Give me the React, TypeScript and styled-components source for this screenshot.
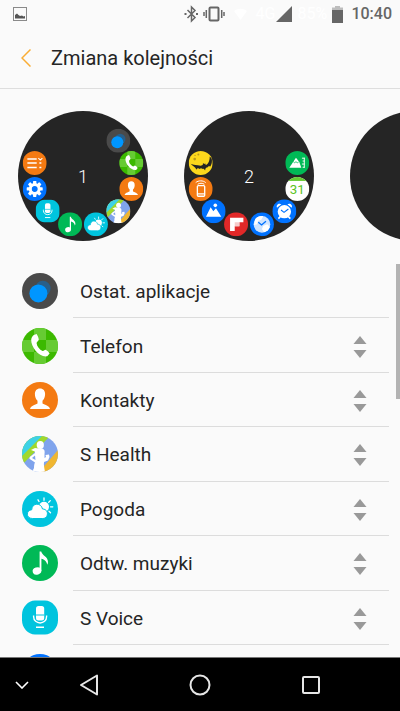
import React from "react";
import styled, { createGlobalStyle } from "styled-components";

const GlobalStyle = createGlobalStyle`
  *, *::before, *::after { box-sizing: border-box; }
  body {
    margin: 0;
    background: #fafafa;
    color: #252525;
    font-family: Roboto, "Noto Sans", sans-serif;
  }
  button {
    margin: 0;
    padding: 0;
    border: 0;
    background: none;
    color: inherit;
    font: inherit;
    cursor: pointer;
  }
  svg { display: block; }
`;

const Screen = styled.div`
  display: flex;
  flex-direction: column;
  height: 100vh;
  overflow: hidden;
`;

const StatusBar = styled.div`
  display: flex;
  align-items: center;
  flex: none;
  height: 28px;
  padding: 0 8px 0 13px;
  color: #666;
`;

const StatusIcons = styled.div`
  display: flex;
  align-items: center;
  margin-left: auto;
`;

const FaintText = styled.span<{ $width: number }>`
  width: ${(p) => p.$width}px;
  color: #fff;
  font-size: 16px;
  line-height: 20px;
  text-align: center;
`;

const Clock = styled.time`
  margin-left: 8px;
  font-size: 16px;
  font-weight: 500;
  line-height: 20px;
`;

const Header = styled.header`
  display: flex;
  align-items: center;
  flex: none;
  height: 61px;
  padding-left: 13px;
  border-bottom: 1px solid #dedede;
`;

const BackButton = styled.button`
  display: grid;
  place-items: center;
  width: 26px;
  height: 40px;
  margin-right: 12px;
`;

const Title = styled.h1`
  margin: 0;
  font-size: 20px;
  font-weight: 400;
  line-height: 24px;
`;

const Carousel = styled.section`
  display: flex;
  flex: none;
  gap: 36px;
  padding: 22px 0 23px 18px;
  overflow: hidden;
`;

const Disc = styled.div`
  position: relative;
  display: grid;
  place-items: center;
  flex: none;
  width: 130px;
  height: 130px;
  border-radius: 50%;
  background: #252525;
  color: #fff;
  font-size: 18px;
  font-weight: 300;
`;

const OrbitItem = styled.span<{ $angle: number }>`
  position: absolute;
  top: calc(50% - 12px);
  left: calc(50% - 12px);
  transform: rotate(${(p) => p.$angle}deg) translate(50px) rotate(${(p) => -p.$angle}deg);
`;

const Badge = styled.span<{ $size: number; $squircle?: boolean }>`
  display: block;
  flex: none;
  width: ${(p) => p.$size}px;
  height: ${(p) => p.$size}px;
  border-radius: ${(p) => (p.$squircle ? "0" : "50%")};
  overflow: hidden;
`;

const ListArea = styled.main`
  position: relative;
  flex: 1;
  min-height: 0;
  overflow: hidden;
`;

const AppList = styled.ul`
  display: grid;
  grid-auto-rows: max(54px, calc((100% - 12px) / 7));
  height: 100%;
  margin: 0;
  padding: 0 11px 0 22px;
  list-style: none;
`;

const AppRow = styled.li`
  display: flex;
  align-items: center;
  gap: 15px;
`;

const RowBody = styled.div`
  display: flex;
  align-items: center;
  justify-content: space-between;
  flex: 1;
  align-self: stretch;
  padding: 3px 22px 0 7px;
  border-bottom: 1px solid #dcdcdc;
`;

const AppName = styled.span`
  font-size: 19px;
  line-height: 24px;
`;

const ReorderButton = styled.button`
  display: block;
`;

const ScrollThumb = styled.div`
  position: absolute;
  top: 0;
  right: 0;
  width: 4px;
  height: 135px;
  background: #b3b3b3;
`;

const NavBar = styled.nav`
  display: grid;
  grid-template-columns: 34px 1fr 1fr 1fr 34px;
  flex: none;
  height: 54px;
  border-top: 1px solid #777;
  background: #000;
`;

const NavButton = styled.button<{ $edge?: boolean }>`
  display: grid;
  align-items: center;
  justify-content: ${(p) => (p.$edge ? "end" : "center")};
  padding-right: ${(p) => (p.$edge ? "5px" : "0")};
`;

type IconName =
  | "recent" | "phone" | "contacts" | "health" | "weather" | "music" | "voice"
  | "settings" | "tasks" | "altitude" | "calendar" | "alarm" | "world"
  | "flip" | "gallery" | "finder" | "moon";

const Fill = ({ color }: { color: string }) => <rect width="36" height="36" fill={color} />;

const gearTeeth = [0, 45, 90, 135, 180, 225, 270, 315];

const art: Record<IconName, React.ReactNode> = {
  recent: (
    <>
      <Fill color="#4a4a4a" />
      <circle cx="20.8" cy="15.6" r="7.8" fill="#285f8a" />
      <circle cx="16.4" cy="20.4" r="9" fill="#0096ff" />
    </>
  ),
  phone: (
    <>
      <Fill color="#3cb900" />
      <path d="M12 0h12v12H12zM0 12h12v12H0zM24 12h12v12H24zM12 24h12v12H12z" fill="#66cb33" />
      <path
        d="M11.8 7 14.6 6c1.2 2 2 3.8 2.2 5.5-.4 1.9-2.3 2.3-2.2 3.7.4 3.4 2.9 6.3 6 7.8 1.2.3 1.8-1.5 3-1.2 1.6.8 2.9 2.2 4 3.7l-2.3 2.8C17 29.6 9 19 9.2 12c.1-2 1-4 2.6-5z"
        fill="#fff"
      />
    </>
  ),
  contacts: (
    <>
      <Fill color="#f47a12" />
      <path
        d="M18 6.5c3.3 0 5.2 2.3 5.1 5.800-.1 2.700-1 5-2.600 6.400v2.600c0 1.300 6.500 1.500 7.500 5.700H8c1-4.200 7.500-4.400 7.500-5.700v-2.600c-1.600-1.400-2.500-3.700-2.600-6.400-.1-3.500 1.800-5.800 5.100-5.800z"
        fill="#fff"
      />
    </>
  ),
  health: (
    <>
      <Fill color="#80a4ec" />
      <path d="M0 0h28L0 29z" fill="#a0d82c" />
      <path d="M0 0h20L0 20z" fill="#3dd2e6" />
      <path d="M36 14 17 36h19z" fill="#f0b630" />
      <ellipse cx="18.3" cy="9" rx="3.6" ry="4" fill="#fff" />
      <path
        d="M9 14 13 12l4 .5h3C22.500 13 23 15 22.500 18v4L24 21l-.5-2 3.500-.5.500 2.500L26 24.500 22 26c-.5 3 .5 7 1 10H10l2-4c0-3 .5-4.500 1-5.500L7.400 22.800 7.700 21 13 17l-.2-1.500z"
        fill="#fff"
      />
      <path d="m13 19.500-3 2.500 3.500 2z" fill="#80a4ec" />
    </>
  ),
  weather: (
    <>
      <Fill color="#00c4de" />
      <circle cx="22" cy="15.8" r="5" fill="#fff" />
      <path
        d="M22 9.300V7M17 10.500l-1-1.700M26.700 11.200l1.600-1.600M28.500 15.800h2.300M27 20.300l1.500 1.500"
        stroke="#fff" strokeWidth="1.3" strokeLinecap="round"
      />
      <path
        d="M10.500 27.500c-7 0-6.500-8.500-.8-8.700.4-7.400 9.600-7.300 10.800-.8 6.500-.2 6.500 9.500.3 9.500z"
        fill="#fff" stroke="#00c4de" strokeWidth="1"
      />
    </>
  ),
  music: (
    <>
      <Fill color="#00b956" />
      <ellipse cx="15" cy="26" rx="4.4" ry="3.6" transform="rotate(-20 15 26)" fill="#fff" />
      <path d="M17.600 6.500h1.600c.8 4 6.800 5 6.800 10.500 0 1-.3 2-.8 2.700-.4-3.600-3-5.200-5.800-6V26h-1.800z" fill="#fff" />
    </>
  ),
  voice: (
    <>
      <path d="M13 .5h10c7 0 13 7 13 14v6c0 7-6 14-13 14H13c-7 0-13-7-13-14v-6c0-7 6-14 13-14z" fill="#00c4de" />
      <rect x="14" y="6" width="8.2" height="14.5" rx="2.5" fill="#fff" />
      <path d="M14 15h8.200" stroke="#00c4de" strokeWidth="1" />
      <path d="M11.600 15.500v1c0 8.600 13 8.600 13 0v-1M14 27.300h8" fill="none" stroke="#fff" strokeWidth="1.4" />
    </>
  ),
  settings: (
    <>
      <Fill color="#0072ff" />
      <g fill="#fff">
        {gearTeeth.map((a) => (
          <rect key={a} x="15.5" y="6" width="5" height="7" rx="1" transform={`rotate(${a} 18 18)`} />
        ))}
      </g>
      <circle cx="18" cy="18" r="6.7" fill="none" stroke="#fff" strokeWidth="4.5" />
    </>
  ),
  tasks: (
    <>
      <Fill color="#f47a12" />
      <path d="M7 12h14M7 18h14M7 24.500h14M25 18h3M25 24.500h3" stroke="#fff" strokeWidth="2.2" />
      <path d="m23.500 10.500 3 3 3-3" fill="none" stroke="#fff" strokeWidth="1.6" />
    </>
  ),
  altitude: (
    <>
      <Fill color="#00b956" />
      <path d="m6 25 6-9 4-6 5 6.500 3 8.500z" fill="#fff" />
      <path d="m12 16 2 1.500 2-1.500 2 1.500 2-1" fill="none" stroke="#00b956" strokeWidth="1.2" />
      <path d="M28.500 10v15M25 10.700h4M26 15h3M25 19.500h4M26 24.300h3" stroke="#fff" strokeWidth="1.4" />
    </>
  ),
  calendar: (
    <>
      <Fill color="#fff" />
      <rect width="36" height="6" fill="#66cb33" />
      <text x="18" y="26" textAnchor="middle" fontSize="20" fontWeight="400" fill="#5ac31e">31</text>
    </>
  ),
  alarm: (
    <>
      <Fill color="#0072ff" />
      <path d="M12 26l-3 3M24 26l3 3" stroke="#fff" strokeWidth="2.4" />
      <circle cx="18" cy="18.5" r="10" fill="#fff" />
      <path d="M7 12.500c-2-4 3-8 6.500-5zM29 12.500c2-4-3-8-6.500-5z" fill="#fff" />
      <path d="m13 16 4.500 3.500 6.500-5" fill="none" stroke="#0072ff" strokeWidth="1.7" />
    </>
  ),
  world: (
    <>
      <Fill color="#0072ff" />
      <circle cx="18" cy="18" r="12.5" fill="#cfe4ff" />
      <path d="M8 10c4-5 9-5 12-4l-3 5-5 2-1 5-5 1zM20 20l6-2 4 4c-1 4-5 7-9 8l-3-5z" fill="#fff" />
      <path d="m12.500 15 5 4 6.500-5.500" fill="none" stroke="#0072ff" strokeWidth="2" />
    </>
  ),
  flip: (
    <>
      <Fill color="#e12828" />
      <path d="M9 8h20v7h-6v6h-7v7H9z" fill="#fff" />
      <path d="M16 15h7v6h-7z" fill="#f7caca" />
    </>
  ),
  gallery: (
    <>
      <Fill color="#0072ff" />
      <path d="m6.500 26 7-14 4 6 4-4.500L29.500 26z" fill="#fff" />
      <circle cx="20.5" cy="9" r="2.7" fill="#fff" />
    </>
  ),
  finder: (
    <>
      <Fill color="#f47a12" />
      <rect x="13" y="13" width="11" height="16" rx="1.5" fill="none" stroke="#fff" strokeWidth="2" />
      <path d="M13 25.500h11" stroke="#fff" strokeWidth="2" />
      <path d="M10.500 8.500c4-3.500 11-3.500 15 0M13.500 11c3-2 7-2 10 0" fill="none" stroke="#fff" strokeWidth="1.5" />
    </>
  ),
  moon: (
    <>
      <Fill color="#fcd71c" />
      <g fill="#b8991c">
        <circle cx="9" cy="12" r="2" />
        <circle cx="14.5" cy="5" r="1.5" />
        <circle cx="9.5" cy="6.5" r="1" />
      </g>
      <path
        d="M3 19c4 2 9 2 15 3l3-1 .5-3 1.500 1.500 2-1 .5 2.500c3-1 6-5 6-13l3 3c1 5 0 9-2 12-2-1-4 0-5 2-1-.5-2 0-3 4-1-2-3-3-4-2-1-1.500-3-1.500-4 0-2-2-4-1.500-5 1-1-4-5-5-8.500-9z"
        fill="#252525"
      />
    </>
  ),
};

const AppIcon = ({ name, size }: { name: IconName; size: number }) => (
  <Badge $size={size} $squircle={name === "voice"}>
    <svg width={size} height={size} viewBox="0 0 36 36" fill="none" aria-hidden="true">
      {art[name]}
    </svg>
  </Badge>
);

const pages: { id: string; label?: string; start: number; icons: IconName[] }[] = [
  {
    id: "first",
    label: "1",
    start: -45,
    icons: ["recent", "phone", "contacts", "health", "weather", "music", "voice", "settings", "tasks"],
  },
  {
    id: "second",
    label: "2",
    start: -15,
    icons: ["altitude", "calendar", "alarm", "world", "flip", "gallery", "finder", "moon"],
  },
  { id: "third", start: 0, icons: [] },
];

const apps: { name?: string; icon: IconName; movable: boolean }[] = [
  { name: "Ostat. aplikacje", icon: "recent", movable: false },
  { name: "Telefon", icon: "phone", movable: true },
  { name: "Kontakty", icon: "contacts", movable: true },
  { name: "S Health", icon: "health", movable: true },
  { name: "Pogoda", icon: "weather", movable: true },
  { name: "Odtw. muzyki", icon: "music", movable: true },
  { name: "S Voice", icon: "voice", movable: true },
  { icon: "settings", movable: false },
];

const PictureGlyph = () => (
  <svg width="14" height="14" viewBox="0 0 14 14" fill="none" aria-hidden="true">
    <rect x=".5" y=".5" width="13" height="13" stroke="#8a8a8a" />
    <path d="M2 11.500V8l2-1.500L5.500 8 7 9l2-.5 1.500 1L12 9v2.500z" fill="#555" />
  </svg>
);

const StatusGlyphs = () => (
  <svg width="70" height="20" viewBox="0 0 70 20" fill="none" aria-hidden="true">
    <path d="m3.500 6 7.500 7.500L7.500 17V3L11 6.500 3.500 14" stroke="#666" strokeWidth="1.5" />
    <path d="M.5 10h2M12 10h2" stroke="#666" strokeWidth="2" />
    <rect x="25.5" y="3.5" width="9" height="13" rx="1" stroke="#666" strokeWidth="2" />
    <path d="M22.300 6v8M20 8v4M37.700 6v8M40 8v4" stroke="#666" strokeWidth="1.5" />
    <path d="M50 7c4-3 9-3 13 0l-6.500 9z" fill="#fff" />
  </svg>
);

const ReorderGlyph = () => (
  <svg width="14" height="22" viewBox="0 0 14 22" fill="#999" aria-hidden="true">
    <path d="M7 0l6.500 8H.5zM.5 14h13L7 22z" />
  </svg>
);

export default function App() {
  return (
    <Screen>
      <GlobalStyle />
      <StatusBar>
        <PictureGlyph />
        <StatusIcons>
          <StatusGlyphs />
          <FaintText $width={22}>4G</FaintText>
          <svg width="16" height="16" viewBox="0 0 16 16" aria-hidden="true">
            <path d="M16 0v16H0z" fill="#666" />
          </svg>
          <FaintText $width={40}>85%</FaintText>
          <svg width="11" height="17" viewBox="0 0 11 17" aria-hidden="true">
            <path d="M3 0h5v1.500h3V5H0V1.500h3z" fill="#bdbdbd" />
            <path d="M0 4h11v13H0z" fill="#666" />
          </svg>
        </StatusIcons>
        <Clock>10:40</Clock>
      </StatusBar>

      <Header>
        <BackButton aria-label="Wstecz">
          <svg width="10" height="18" viewBox="0 0 10 18" fill="none" aria-hidden="true">
            <path d="M9.500.5 1 9l8.500 8.500" stroke="#f9ad35" strokeWidth="1.5" />
          </svg>
        </BackButton>
        <Title>Zmiana kolejności</Title>
      </Header>

      <Carousel aria-label="Strony">
        {pages.map((page) => (
          <Disc key={page.id}>
            {page.label}
            {page.icons.map((icon, i) => (
              <OrbitItem key={icon} $angle={page.start + i * 30}>
                <AppIcon name={icon} size={24} />
              </OrbitItem>
            ))}
          </Disc>
        ))}
      </Carousel>

      <ListArea>
        <AppList>
          {apps.map((app) => (
            <AppRow key={app.icon}>
              <AppIcon name={app.icon} size={36} />
              <RowBody>
                {app.name && <AppName>{app.name}</AppName>}
                {app.movable && (
                  <ReorderButton aria-label={`Przenieś: ${app.name}`}>
                    <ReorderGlyph />
                  </ReorderButton>
                )}
              </RowBody>
            </AppRow>
          ))}
        </AppList>
        <ScrollThumb />
      </ListArea>

      <NavBar>
        <NavButton $edge aria-label="Ukryj pasek">
          <svg width="14" height="8" viewBox="0 0 14 8" fill="none" aria-hidden="true">
            <path d="m1 1 6 6 6-6" stroke="#fff" strokeWidth="1.6" />
          </svg>
        </NavButton>
        <NavButton aria-label="Wstecz">
          <svg width="20" height="22" viewBox="0 0 20 22" fill="none" aria-hidden="true">
            <path d="M18 1.500v19L2 11z" stroke="#e6e6e6" strokeWidth="2" strokeLinejoin="round" />
          </svg>
        </NavButton>
        <NavButton aria-label="Ekran główny">
          <svg width="22" height="22" viewBox="0 0 22 22" fill="none" aria-hidden="true">
            <circle cx="11" cy="11" r="9.5" stroke="#e6e6e6" strokeWidth="2" />
          </svg>
        </NavButton>
        <NavButton aria-label="Ostatnie">
          <svg width="20" height="20" viewBox="0 0 20 20" fill="none" aria-hidden="true">
            <rect x="2" y="2" width="16" height="16" rx="1" stroke="#e6e6e6" strokeWidth="2" />
          </svg>
        </NavButton>
      </NavBar>
    </Screen>
  );
}
